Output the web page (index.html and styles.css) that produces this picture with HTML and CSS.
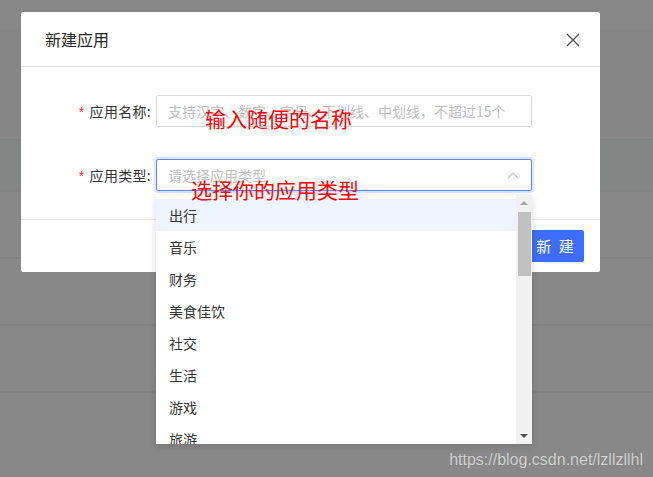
FILE: index.html
```html
<!DOCTYPE html>
<html lang="en">
<head>
    <meta charset="UTF-8">
    <title>新建应用</title>
    <link rel="stylesheet" href="styles.css">
</head>
<body>

    <div class="page">
        <div class="bg_row bg_row_top"></div>
        <div class="bg_row bg_row_a"></div>
        <div class="bg_row bg_row_b"></div>
        <div class="bg_row"></div>
        <div class="bg_row"></div>
        <div class="bg_row"></div>
        <div class="bg_row"></div>
    </div>

    <div class="modal">
        <div class="modal_head">
            <div class="modal_head_title">新建应用</div>
            <a href="#" class="modal_close">
                <svg width="14" height="14" viewBox="0 0 14 14">
                    <path d="M1 1L13 13M13 1L1 13" stroke="#555" stroke-width="1.4" fill="none"/>
                </svg>
            </a>
        </div>
        <div class="modal_body">
            <div class="form_row">
                <label class="form_label"><i class="form_required">*</i>应用名称:</label>
                <div class="form_input">支持汉字、数字、字母、下划线、中划线，不超过15个</div>
            </div>
            <div class="form_row">
                <label class="form_label"><i class="form_required">*</i>应用类型:</label>
                <div class="form_select">
                    <span class="form_select_text">请选择应用类型</span>
                    <svg class="form_select_arrow" width="12" height="8" viewBox="0 0 12 8">
                        <path d="M1 7L6 2L11 7" stroke="#c0c0c0" stroke-width="1.2" fill="none"/>
                    </svg>
                    <div class="dropdown">
                        <div class="dropdown_list">
                            <div class="dropdown_item current">出行</div>
                            <div class="dropdown_item">音乐</div>
                            <div class="dropdown_item">财务</div>
                            <div class="dropdown_item">美食佳饮</div>
                            <div class="dropdown_item">社交</div>
                            <div class="dropdown_item">生活</div>
                            <div class="dropdown_item">游戏</div>
                            <div class="dropdown_item">旅游</div>
                        </div>
                        <div class="dropdown_scroll">
                            <div class="dropdown_scroll_up"></div>
                            <div class="dropdown_scroll_thumb"></div>
                            <div class="dropdown_scroll_down"></div>
                        </div>
                    </div>
                </div>
            </div>
        </div>
        <div class="modal_footer">
            <a href="#" class="btn_primary">新 建</a>
        </div>
    </div>

    <div class="note note_name">输入随便的名称</div>
    <div class="note note_type">选择你的应用类型</div>

    <div class="watermark">https://blog.csdn.net/lzllzllhl</div>

</body>
</html>
```

FILE: styles.css
```css
*{
    margin: 0;
    padding: 0;
    box-sizing: border-box;
}
body{
    width: 653px;
    height: 477px;
    overflow: hidden;
    background: #888888;
    font-family: "Noto Sans CJK SC", "Liberation Sans", sans-serif;
    position: relative;
}
a{
    text-decoration: none;
}

/* 背景遮罩下的列表行 */
.page{
    display: flex;
    flex-direction: column;
}
.bg_row{
    height: 67px;
    border-top: 2px solid #828282;
    background: #888888;
}
.bg_row_top{
    height: 30px;
    border-top: none;
    background: #878787;
}
.bg_row_a{
    height: 109px;
    border-top: 1px solid #848484;
    background: #858685;
}
.bg_row_b{
    height: 51px;
    border-top: 1px solid #7f8180;
    background: #838584;
}

/* 弹窗 */
.modal{
    position: absolute;
    left: 21px;
    top: 12px;
    width: 579px;
    background: #fff;
    border-radius: 2px;
    color: #333;
}
.modal_head{
    height: 55px;
    padding: 0 20px 0 24px;
    border-bottom: 1px solid #e8e8e8;
    display: flex;
    align-items: center;
    justify-content: space-between;
}
.modal_head_title{
    font-size: 16px;
    color: #262626;
    line-height: 22px;
    padding-bottom: 1px;
}
.modal_close{
    display: flex;
    margin-top: 1px;
}
.modal_body{
    padding: 28px 0 28px 0;
    border-bottom: 1px solid #e8e8e8;
}
.form_row{
    display: flex;
    align-items: center;
    height: 32px;
    margin-bottom: 32px;
}
.form_row:last-child{
    margin-bottom: 0;
}
.form_label{
    width: 135px;
    padding-right: 5px;
    text-align: right;
    font-size: 14px;
    color: #333;
    letter-spacing: 0.3px;
}
.form_required{
    font-style: normal;
    color: #f5222d;
    margin-right: 5px;
    font-family: "Liberation Sans", sans-serif;
}
.form_input,
.form_select{
    width: 376px;
    height: 32px;
    border: 1px solid #d9d9d9;
    border-radius: 2px;
    padding: 0 11px;
    font-size: 14px;
    line-height: 30px;
    color: #bfbfbf;
    white-space: nowrap;
    overflow: hidden;
}
.form_select{
    border-color: #5b87fd;
    box-shadow: 0 0 0 2px rgba(91,135,253,0.2);
    display: flex;
    align-items: center;
    justify-content: space-between;
    position: relative;
    overflow: visible;
}
.form_select_arrow{
    margin-right: 1px;
}

/* 下拉菜单 */
.dropdown{
    position: absolute;
    left: -1px;
    top: 35px;
    width: 376px;
    height: 249px;
    background: #fff;
    box-shadow: 0 2px 8px rgba(0,0,0,0.15);
    display: flex;
    z-index: 10;
}
.dropdown_list{
    flex: 1;
    padding-top: 4px;
    overflow: hidden;
}
.dropdown_item{
    height: 32px;
    line-height: 32px;
    padding-left: 13px;
    font-size: 14px;
    color: #333;
}
.dropdown_item.current{
    background: #eef5ff;
}
.dropdown_scroll{
    width: 16px;
    background: #f1f1f1;
    display: flex;
    flex-direction: column;
    align-items: center;
}
.dropdown_scroll_up,
.dropdown_scroll_down{
    width: 0;
    height: 0;
    border-left: 4px solid transparent;
    border-right: 4px solid transparent;
}
.dropdown_scroll_up{
    margin-top: 6px;
    border-bottom: 4px solid #a3a3a3;
}
.dropdown_scroll_down{
    margin-top: auto;
    margin-bottom: 6px;
    border-top: 4px solid #505050;
}
.dropdown_scroll_thumb{
    width: 13px;
    height: 64px;
    margin-top: 7px;
    background: #c1c1c1;
}

/* 底部按钮 */
.modal_footer{
    height: 52px;
    padding: 10px 16px;
    display: flex;
    justify-content: flex-end;
}
.btn_primary{
    display: block;
    width: 58px;
    height: 32px;
    line-height: 32px;
    text-align: center;
    background: #3e6dfd;
    border-radius: 2px;
    color: #fff;
    font-size: 15px;
    letter-spacing: 2px;
    padding-left: 2px;
}

/* 标注 */
.note{
    position: absolute;
    color: #ff0000;
    font-size: 21px;
    line-height: 24px;
    white-space: nowrap;
    z-index: 20;
}
.note_name{
    left: 205px;
    top: 106px;
}
.note_type{
    left: 191px;
    top: 177px;
}

.watermark{
    position: absolute;
    right: 10px;
    bottom: 8px;
    font-family: "Liberation Sans", sans-serif;
    font-size: 16px;
    color: #d0d0d0;
    text-shadow: 0 0 1px rgba(0,0,0,0.15);
}
```
